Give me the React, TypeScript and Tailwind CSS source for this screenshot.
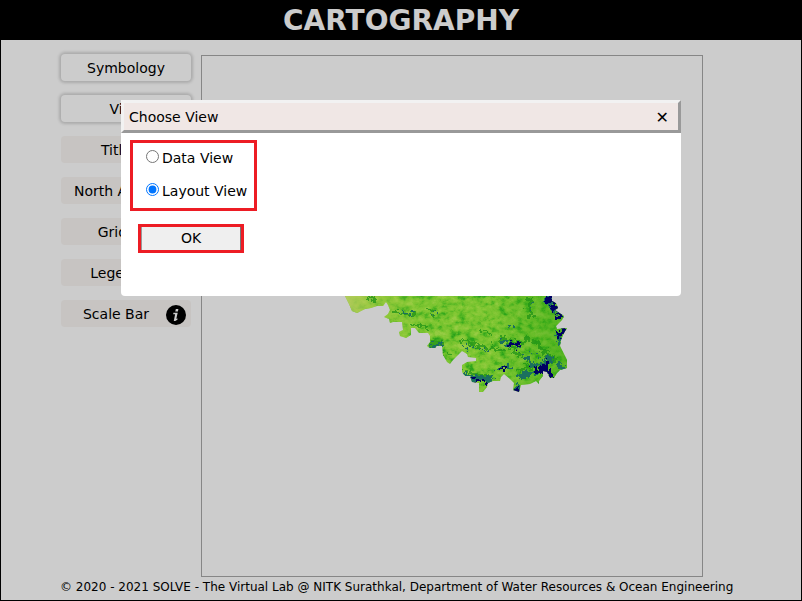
import { useState } from "react";

const tools = [
  { label: "Symbology", active: true, info: false },
  { label: "View", active: true, info: false },
  { label: "Title", active: false, info: false },
  { label: "North Arrow", active: false, info: false },
  { label: "Grids", active: false, info: false },
  { label: "Legend", active: false, info: false },
  { label: "Scale Bar", active: false, info: true },
];

function InfoIcon() {
  return (
    <svg viewBox="0 0 20 20" className="h-5 w-5" aria-hidden="true">
      <circle cx="10" cy="10" r="10" fill="#000" />
      <path d="M9.8 4h2.6l-.5 2.4H9.3z" fill="#fff" />
      <path d="M7.4 7.8h4.3l-1.4 6 1.3-.3-.2 1.3-2.2 1.1H7.8l1.3-6.7H7.2z" fill="#fff" />
    </svg>
  );
}

/* Raster terrain layer: the district outline filled with an elevation ramp. */
function TerrainMap() {
  return (
    <svg viewBox="344 234 240 160" className="h-40 w-60" shapeRendering="crispEdges" role="img" aria-label="Elevation map">
      <defs>
        <clipPath id="district">
          <path d="M345 290V296L349 304L352 311L357 313L365 309L371 308L377 306L383 306L386 302L388 305L390 310L388 314L384 317L389 319L390 323L393 322H402L403 330L399 332L400 336L406 338L411 335V328H415L419 333H428L430 336V342L427 346L430 348H435L437 346H442L443 355L447 362L450 364L453 360L462 351L467 354L468 357L476 358V361L467 362L462 365V372L465 376H470L472 382L479 383V392H483L487 387L488 383L493 381H500L501 377L504 374L510 379L514 383L513 390L519 392L521 385L530 384L536 381L539 384V381L543 376V371L547 372L550 378H554L557 373L560 370L567 368V360L563 352L560 346L561 340L564 333L567 328L557 329L556 326L562 320L564 316L558 312L555 310L558 308L556 303L552 301V290Z" />
        </clipPath>
        <linearGradient id="westFade" x1="345" x2="430" y1="0" y2="0" gradientUnits="userSpaceOnUse">
          <stop offset="0" stopColor="#ecff7e" stopOpacity=".85" />
          <stop offset=".4" stopColor="#d8ff58" stopOpacity=".5" />
          <stop offset="1" stopColor="#b8ff44" stopOpacity=".1" />
        </linearGradient>
        <linearGradient id="eastFade" x1="490" x2="565" y1="0" y2="0" gradientUnits="userSpaceOnUse">
          <stop offset="0" stopColor="#35cc14" stopOpacity="0" />
          <stop offset="1" stopColor="#35cc14" stopOpacity=".5" />
        </linearGradient>
        <filter id="relief" x="0" y="0" width="100%" height="100%" colorInterpolationFilters="sRGB">
          <feTurbulence type="fractalNoise" baseFrequency="0.12 0.16" numOctaves="6" seed="8" />
          <feColorMatrix values="1.5 .8 0 0 -.6  1.5 .8 0 0 -.6  1.5 .8 0 0 -.6  0 0 0 0 1" />
          <feComponentTransfer>
            <feFuncR type="table" tableValues=".16 .36 .56 .64 .74" />
            <feFuncG type="table" tableValues=".78 .88 .95 .98 1" />
            <feFuncB type="table" tableValues=".12 .16 .22 .26 .34" />
          </feComponentTransfer>
        </filter>
        <filter id="rough" x="344" y="280" width="240" height="120" filterUnits="userSpaceOnUse" colorInterpolationFilters="sRGB">
          <feTurbulence type="fractalNoise" baseFrequency="0.2" numOctaves="4" seed="3" result="noise" />
          <feDisplacementMap in="SourceGraphic" in2="noise" scale="13" xChannelSelector="R" yChannelSelector="G" result="moved" />
          <feGaussianBlur in="moved" stdDeviation="0.6" />
        </filter>
      </defs>
      <g clipPath="url(#district)">
        <rect x="344" y="234" width="240" height="160" filter="url(#relief)" />
        <rect x="344" y="290" width="240" height="104" fill="url(#westFade)" />
        <rect x="490" y="290" width="94" height="104" fill="url(#eastFade)" />
        <g filter="url(#rough)">
          <g fill="none" stroke="#28b81c" strokeOpacity=".75" strokeWidth="3">
            <path d="M390 311L402 313L416 315M368 297L376 300M428 309L436 313M412 325L428 327M460 340L484 347L505 351" />
            <path d="M500 337L516 343L530 340M528 296L532 318M508 346L522 356M517 370L540 364M535 340L545 352L555 360" strokeWidth="4" />
            <path d="M462 371L490 377M429 344L443 343M445 353L453 356M480 330L492 334" />
          </g>
          <g fill="none" stroke="#228c76" strokeWidth="1">
            <path d="M397 312L413 314M432 312H437M462 346L490 351M508 326H513" />
            <path d="M427 346H443M501 341L520 347M496 369L511 366" strokeWidth="3" />
            <path d="M525 358L535 366L546 361M518 376L540 372L552 357M470 378L492 379M545 297L558 314M558 330L560 345M556 364L566 369M514 388H520M462 373L471 379" strokeWidth="4" />
            <path d="M531 300L532 312M521 352L525 360M532 351L548 365" />
          </g>
          <g fill="none" stroke="#00007c" strokeWidth="3">
            <path d="M509 343L520 346M499 369L505 368M472 381L486 382M531 367L536 368M534 373L548 365M544 372L547 361" />
            <path d="M546 366L549 377L554 377M541 370L550 373" strokeWidth="5" />
            <path d="M546 295L553 303M553 304L556 309M556 318L563 315M560 330L561 336M564 328L560 339M513 391H519" strokeWidth="5" />
          </g>
        </g>
      </g>
    </svg>
  );
}

export default function App() {
  const [view, setView] = useState("layout");
  return (
    <div className="relative flex min-h-screen flex-col border border-black bg-white text-sm text-black [font-family:'DejaVu_Sans',Verdana,sans-serif]">
      <header className="flex h-[39px] items-center justify-center bg-black">
        <h1 className="text-[28px] leading-9 font-bold text-white">CARTOGRAPHY</h1>
      </header>
      <main className="flex gap-2.5 pt-[15px] pl-[60px]">
        <nav className="-mt-px flex w-[130px] flex-col gap-3.5">
          {tools.map((tool) => (
            <button
              key={tool.label}
              type="button"
              className={
                tool.active
                  ? "h-[27px] w-full rounded bg-white shadow-[0_0_3px_2px_#d6d6d6]"
                  : "relative h-[27px] w-full rounded-sm bg-[#f9f6f3] pr-5"
              }
            >
              {tool.label}
              {tool.info && (
                <span className="absolute top-[5px] right-[5px]">
                  <InfoIcon />
                </span>
              )}
            </button>
          ))}
        </nav>
        <section className="flex h-[522px] w-[502px] flex-col border border-[#a8a8a8] pt-[178px] pl-[142px]">
          <TerrainMap />
        </section>
      </main>
      <footer className="pl-[59px] text-xs leading-5">
        © 2020 - 2021 SOLVE - The Virtual Lab @ NITK Surathkal, Department of Water Resources &amp; Ocean Engineering
      </footer>
      <div className="absolute inset-0 flex items-start justify-center bg-black/20 pt-[99px]">
        <div role="dialog" aria-label="Choose View" className="h-[196px] w-[560px] rounded bg-white">
          <div className="flex h-[33px] items-center justify-between border-3 border-t-[#f2f2f2] border-r-[#999] border-b-[#999] border-l-[#f2f2f2] bg-[#f0e7e5] pr-[9px] pl-[5px]">
            <h2>Choose View</h2>
            <button type="button" aria-label="Close" className="pt-0.5 text-base">✕</button>
          </div>
          <fieldset className="mt-[7px] ml-[9px] flex h-[71px] w-[127px] flex-col gap-[13px] border-3 border-[#ed1c24] pt-[5px] pl-[13px]">
            <label className="flex items-start gap-[3px]">
              <input type="radio" name="view" className="mt-[2px] h-[13px] w-[13px]" checked={view === "data"} onChange={() => setView("data")} />
              Data View
            </label>
            <label className="flex items-start gap-[3px]">
              <input type="radio" name="view" className="mt-[2px] h-[13px] w-[13px]" checked={view === "layout"} onChange={() => setView("layout")} />
              Layout View
            </label>
          </fieldset>
          <button type="button" className="mt-[13px] ml-[17px] h-[29px] w-[106px] border-3 border-[#ed1c24] bg-[#efefef] pb-0.5 shadow-[inset_-1px_0_0_#767676,inset_1px_0_0_#999]">
            OK
          </button>
        </div>
      </div>
    </div>
  );
}
